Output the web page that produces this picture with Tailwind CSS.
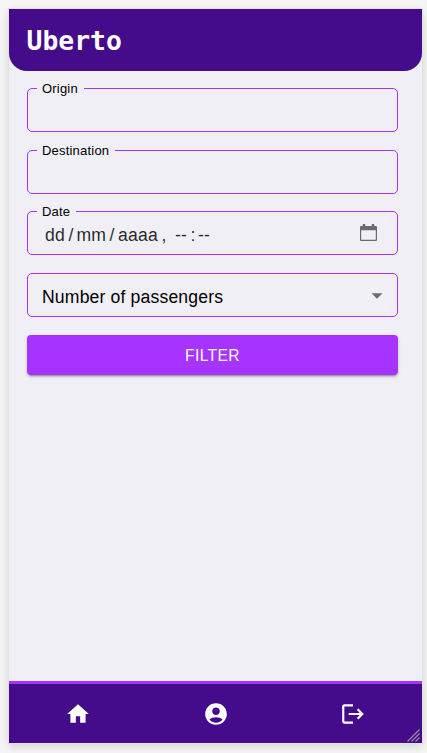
<!DOCTYPE html>
<html lang="en">
<head>
<meta charset="utf-8">
<title>Uberto</title>
<script src="https://cdn.jsdelivr.net/npm/@tailwindcss/browser@4"></script>
</head>
<body class="h-[753px] overflow-hidden bg-[#f5f5f5] p-[9px] pr-[5px] font-['Liberation_Sans',Arial,sans-serif]">
<div class="relative flex h-[734px] w-[413px] flex-col bg-[#f0eff5] shadow-[0_0_0_1px_#e2e2e4,0_3px_9px_rgba(0,0,0,0.16)]">
  <header class="flex h-[62px] shrink-0 items-center rounded-b-[18px] bg-[#440b8a] pt-[2px] pl-[17.5px]">
    <h1 class="font-['DejaVu_Sans_Mono',monospace] text-[26.4px] leading-[60px] font-bold text-white">Uberto</h1>
  </header>
  <main class="flex flex-1 flex-col pt-[17px] pl-[18px]">
    <div class="relative h-11 w-[371px] rounded-[5px] border border-[#a633ff]">
      <label class="absolute -top-[9px] left-[9px] w-[47px] bg-[#f0eff5] pl-[5px] text-[13px] leading-[18px] tracking-[0.2px] whitespace-nowrap text-black">Origin</label>
    </div>
    <div class="relative mt-[18px] h-11 w-[371px] rounded-[5px] border border-[#a633ff]">
      <label class="absolute -top-[9px] left-[9px] w-[78px] bg-[#f0eff5] pl-[5px] text-[13px] leading-[18px] tracking-[0.2px] whitespace-nowrap text-black">Destination</label>
    </div>
    <div class="relative mt-[17px] flex h-11 w-[371px] items-center justify-between rounded-[5px] border border-[#a633ff] pr-5 pl-[17px]">
      <label class="absolute -top-[9px] left-[9px] w-[39px] bg-[#f0eff5] pl-[5px] text-[13px] leading-[18px] tracking-[0.2px] whitespace-nowrap text-black">Date</label>
      <div class="flex pt-[3px] text-[17.6px] leading-[22px] tracking-[0.2px] text-black/85">
        <span class="w-[23.5px]">dd</span><span class="w-[8px]">/</span><span class="w-[33px]">mm</span><span class="w-[8.5px]">/</span><span class="w-[43.5px]">aaaa</span><span class="w-[13.5px]">,</span><span class="w-[15.5px]">--</span><span class="w-[7.5px]">:</span><span>--</span>
      </div>
      <svg class="mb-[1px] -mr-[1px] h-[18px] w-[18px]" viewBox="0 0 18 18" fill="#6b6a6d"><path fill-rule="evenodd" d="M2.800 0h2.400v2h6.600V0h2.400v2H16Q17 2 17 3V16Q17 17 16 17H1Q0 17 0 16V3Q0 2 1 2H2.800zM1.200 6.300V15.300Q1.200 15.800 1.700 15.800H15.300Q15.800 15.800 15.800 15.300V6.300z"/></svg>
    </div>
    <div class="mt-[18px] flex h-11 w-[371px] items-center justify-between rounded-[5px] border border-[#a633ff] pr-[14px] pl-[14px]">
      <span class="pt-[3px] text-[17.6px] leading-[22px] tracking-[0.16px] text-black">Number of passengers</span>
      <svg class="mt-[1px] h-[6px] w-[12px]" viewBox="0 0 12 6" fill="#6d6b70"><path d="M.5 .3h11L6 5.800z"/></svg>
    </div>
    <button class="mt-[18px] h-10 w-[371px] rounded-[4px] bg-[#a633ff] pt-[1px] text-[15.6px] leading-6 tracking-[0.4px] text-white shadow-[0_3px_1px_-2px_rgba(0,0,0,0.2),0_2px_2px_rgba(0,0,0,0.14),0_1px_4px_rgba(0,0,0,0.12)]">FILTER</button>
  </main>
  <nav class="flex h-[62px] shrink-0 items-center justify-around border-t-[3px] border-[#a633ff] bg-[#440b8a] pt-[1px] text-white">
    <svg class="size-[26px]" viewBox="0 0 24 24" fill="currentColor"><path d="M10 20v-6h4v6h5v-8h3L12 3 2 12h3v8z"/></svg>
    <svg class="ml-[1px] size-[26px]" viewBox="0 0 24 24" fill="currentColor"><path d="M12 2C6.480 2 2 6.480 2 12s4.480 10 10 10 10-4.480 10-10S17.520 2 12 2zm0 4c1.930 0 3.500 1.570 3.500 3.500S13.930 13 12 13s-3.500-1.570-3.500-3.500S10.070 6 12 6zm0 14c-2.030 0-4.430-.82-6.140-2.880C7.550 15.800 9.680 15 12 15s4.450.8 6.140 2.120C16.430 19.180 14.030 20 12 20z"/></svg>
    <svg class="size-[26px]" viewBox="0 0 24 24" fill="currentColor"><path d="m17 7-1.410 1.410L18.170 11H8v2h10.170l-2.580 2.580L17 17l5-5zM4 5h8V3H4c-1.100 0-2 .9-2 2v14c0 1.100.9 2 2 2h8v-2H4z"/></svg>
  </nav>
  <svg class="absolute right-[2px] bottom-[1px] h-[13px] w-[13px]" viewBox="0 0 13 13" fill="none" stroke="#9b8f9f" stroke-width="1.100"><path d="M.5 12.500l12-12M4.500 12.500l8-8M8.500 12.500l4-4"/></svg>
</div>
</body>
</html>
